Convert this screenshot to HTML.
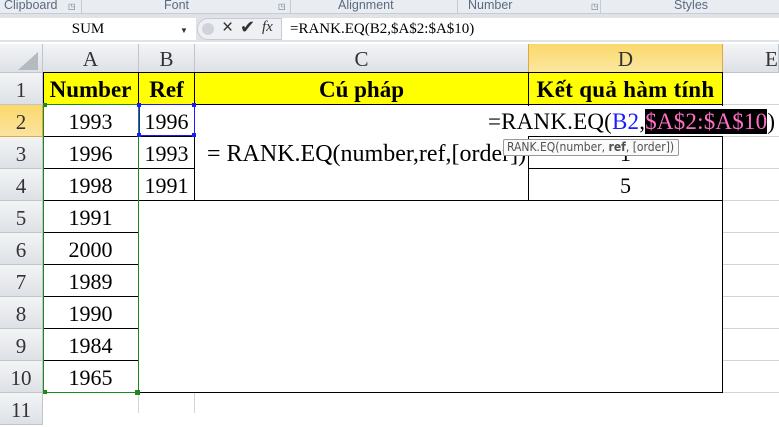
<!DOCTYPE html>
<html><head><meta charset="utf-8"><style>
*{margin:0;padding:0;box-sizing:border-box}
body{width:779px;height:412px;overflow:hidden;background:#fff;position:relative;font-family:"Liberation Serif",serif}
.a{position:absolute}
.rib{left:0;top:0;width:779px;height:14px;background:#e9edf2;border-bottom:1px solid #c5ccd6;font-family:"Liberation Sans",sans-serif;font-size:12.5px;color:#5a6a80}
.rib span{position:absolute;top:-2px}
.fb{left:0;top:14px;width:779px;height:28px;background:#dfe3e8}
.hdr{background:linear-gradient(#f3f4f6,#dde1e6);border-right:1px solid #c0c5cc;border-bottom:1px solid #c0c5cc;color:#333;font-size:21px;text-align:center}
.cell{font-size:22px;text-align:center;color:#000}
.h{position:absolute;background:#000;height:1px}
.v{position:absolute;background:#000;width:1px}
.g{position:absolute;background:#d4d4d4}
</style></head><body>
<div class="a rib">
<span style="left:4px">Clipboard</span><span style="left:68px;font-size:8px;top:2px">◳</span>
<span style="left:164px">Font</span><span style="left:278px;font-size:8px;top:2px">◳</span>
<span style="left:338px">Alignment</span>
<span style="left:468px">Number</span><span style="left:591px;font-size:8px;top:2px">◳</span>
<span style="left:674px">Styles</span>
<div class="a" style="left:81px;top:0;width:1px;height:14px;background:#c5ccd6"></div>
<div class="a" style="left:290px;top:0;width:1px;height:14px;background:#c5ccd6"></div>
<div class="a" style="left:457px;top:0;width:1px;height:14px;background:#c5ccd6"></div>
<div class="a" style="left:600px;top:0;width:1px;height:14px;background:#c5ccd6"></div>
</div>
<div class="a fb">
<div class="a" style="left:0;top:4px;width:196px;height:22px;background:#fff;font-size:15px;text-align:center;line-height:22px;padding-right:20px">SUM</div>
<div class="a" style="left:180px;top:12px;font-size:8px;color:#333">▼</div>
<div class="a" style="left:197px;top:4px;width:85px;height:22px;background:#eef0f3;border-radius:11px 0 0 11px;border:1px solid #c5ccd6"></div>
<div class="a" style="left:202px;top:9px;width:12px;height:12px;border-radius:6px;background:#d0d4da"></div>
<div class="a" style="left:222px;top:3px;font-family:'Liberation Sans',sans-serif;font-size:19px;color:#333">×</div>
<div class="a" style="left:240px;top:3px;font-size:18px;color:#333">✔</div>
<div class="a" style="left:262px;top:5px;font-size:15px;font-style:italic;color:#333">fx</div>
<div class="a" style="left:282px;top:4px;width:497px;height:22px;background:#fff;font-size:15px;line-height:22px;padding-left:8px">=RANK.EQ(B2,$A$2:$A$10)</div>
</div>
<div class="a" style="left:0;top:42px;width:779px;height:2px;background:#fff"></div>
<div class="a hdr" style="left:0;top:44px;width:43px;height:29px"></div>
<div class="a" style="left:18px;top:52px;width:0;height:0;border-left:20px solid transparent;border-bottom:18px solid #b5bac1"></div>
<div class="a hdr" style="left:43px;top:44px;width:96px;height:29px;line-height:30px">A</div>
<div class="a hdr" style="left:139px;top:44px;width:56px;height:29px;line-height:30px">B</div>
<div class="a hdr" style="left:195px;top:44px;width:334px;height:29px;line-height:30px">C</div>
<div class="a hdr" style="left:528px;top:44px;width:195px;height:29px;line-height:30px;background:linear-gradient(#fbd86a,#fbe7a2);border-color:#e0a840;border-left:1px solid #e0a840">D</div>
<div class="a hdr" style="left:723px;top:44px;width:56px;height:29px;line-height:30px;text-align:left;padding-left:42px">E</div>
<div class="a hdr" style="left:0;top:73px;width:43px;height:32px;line-height:34px">1</div>
<div class="a hdr" style="left:0;top:105px;width:43px;height:32px;line-height:34px;background:linear-gradient(#fbd86a,#fbe3a0);border-color:#e0a840">2</div>
<div class="a hdr" style="left:0;top:137px;width:43px;height:32px;line-height:34px">3</div>
<div class="a hdr" style="left:0;top:169px;width:43px;height:32px;line-height:34px">4</div>
<div class="a hdr" style="left:0;top:201px;width:43px;height:32px;line-height:34px">5</div>
<div class="a hdr" style="left:0;top:233px;width:43px;height:32px;line-height:34px">6</div>
<div class="a hdr" style="left:0;top:265px;width:43px;height:32px;line-height:34px">7</div>
<div class="a hdr" style="left:0;top:297px;width:43px;height:32px;line-height:34px">8</div>
<div class="a hdr" style="left:0;top:329px;width:43px;height:32px;line-height:34px">9</div>
<div class="a hdr" style="left:0;top:361px;width:43px;height:32px;line-height:34px">10</div>
<div class="a hdr" style="left:0;top:393px;width:43px;height:32px;line-height:34px">11</div>
<div class="g" style="left:723px;top:104px;width:56px;height:1px"></div>
<div class="g" style="left:723px;top:136px;width:56px;height:1px"></div>
<div class="g" style="left:723px;top:168px;width:56px;height:1px"></div>
<div class="g" style="left:723px;top:200px;width:56px;height:1px"></div>
<div class="g" style="left:723px;top:232px;width:56px;height:1px"></div>
<div class="g" style="left:723px;top:264px;width:56px;height:1px"></div>
<div class="g" style="left:723px;top:296px;width:56px;height:1px"></div>
<div class="g" style="left:723px;top:328px;width:56px;height:1px"></div>
<div class="g" style="left:723px;top:360px;width:56px;height:1px"></div>
<div class="g" style="left:723px;top:392px;width:56px;height:1px"></div>
<div class="g" style="left:138px;top:393px;width:1px;height:20px"></div>
<div class="g" style="left:194px;top:393px;width:1px;height:20px"></div>
<div class="a" style="left:43px;top:73px;width:680px;height:31px;background:#ffff00"></div>
<div class="a cell" style="left:43px;top:73px;width:95px;line-height:34px;font-weight:bold;font-size:23px">Number</div>
<div class="a cell" style="left:138px;top:73px;width:57px;line-height:34px;font-weight:bold;font-size:23px">Ref</div>
<div class="a cell" style="left:195px;top:73px;width:333px;line-height:34px;font-weight:bold;font-size:23px">Cú pháp</div>
<div class="a cell" style="left:528px;top:73px;width:195px;line-height:34px;font-weight:bold;font-size:23px;letter-spacing:0.3px">Kết quả hàm tính</div>
<div class="a cell" style="left:43px;top:105px;width:95px;line-height:34px">1993</div>
<div class="a cell" style="left:43px;top:137px;width:95px;line-height:34px">1996</div>
<div class="a cell" style="left:43px;top:169px;width:95px;line-height:34px">1998</div>
<div class="a cell" style="left:43px;top:201px;width:95px;line-height:34px">1991</div>
<div class="a cell" style="left:43px;top:233px;width:95px;line-height:34px">2000</div>
<div class="a cell" style="left:43px;top:265px;width:95px;line-height:34px">1989</div>
<div class="a cell" style="left:43px;top:297px;width:95px;line-height:34px">1990</div>
<div class="a cell" style="left:43px;top:329px;width:95px;line-height:34px">1984</div>
<div class="a cell" style="left:43px;top:361px;width:95px;line-height:34px">1965</div>
<div class="a cell" style="left:138px;top:105px;width:57px;line-height:34px">1996</div>
<div class="a cell" style="left:138px;top:137px;width:57px;line-height:34px">1993</div>
<div class="a cell" style="left:138px;top:169px;width:57px;line-height:34px">1991</div>
<div class="a cell" style="left:195px;top:137px;width:333px;line-height:34px;text-align:left;padding-left:12px;font-size:24px;white-space:nowrap">= RANK.EQ(number,ref,[order])</div>
<div class="a cell" style="left:528px;top:169px;width:195px;line-height:34px">5</div>
<div class="a cell" style="left:528px;top:137px;width:195px;line-height:34px">1</div>
<div class="h" style="left:43px;top:72px;width:680px"></div>
<div class="h" style="left:138px;top:104px;width:585px"></div>
<div class="h" style="left:43px;top:136px;width:152px"></div>
<div class="h" style="left:528px;top:136px;width:195px"></div>
<div class="h" style="left:43px;top:168px;width:152px"></div>
<div class="h" style="left:528px;top:168px;width:195px"></div>
<div class="h" style="left:43px;top:200px;width:680px"></div>
<div class="h" style="left:43px;top:232px;width:95px"></div>
<div class="h" style="left:43px;top:264px;width:95px"></div>
<div class="h" style="left:43px;top:296px;width:95px"></div>
<div class="h" style="left:43px;top:328px;width:95px"></div>
<div class="h" style="left:43px;top:360px;width:95px"></div>
<div class="h" style="left:138px;top:392px;width:585px"></div>
<div class="v" style="left:43px;top:72px;height:33px"></div>
<div class="v" style="left:138px;top:72px;height:320px"></div>
<div class="v" style="left:194px;top:72px;height:128px"></div>
<div class="v" style="left:528px;top:72px;height:128px"></div>
<div class="v" style="left:722px;top:72px;height:321px"></div>
<div class="a" style="left:43px;top:104px;width:96px;height:289px;border:1px solid #1a8a1a"></div>
<div class="a" style="left:43px;top:103px;width:4px;height:4px;background:#1a8a1a"></div>
<div class="a" style="left:135px;top:390px;width:5px;height:5px;background:#1a8a1a"></div>
<div class="a" style="left:43px;top:390px;width:4px;height:4px;background:#1a8a1a"></div>
<div class="a" style="left:139px;top:104px;width:56px;height:32px;border:1px solid #1a1aff"></div>
<div class="a" style="left:137px;top:103px;width:4px;height:4px;background:#1a1aff"></div>
<div class="a" style="left:192px;top:103px;width:4px;height:4px;background:#1a1aff"></div>
<div class="a" style="left:137px;top:133px;width:4px;height:4px;background:#1a1aff"></div>
<div class="a" style="left:192px;top:133px;width:4px;height:4px;background:#1a1aff"></div>
<div class="a" style="left:488px;top:106px;height:30px;font-size:23px;line-height:32px;white-space:nowrap;background:#fff;letter-spacing:0.2px">=RANK.EQ(<span style="color:#1a1aff">B2</span>,<span style="background:#000;color:#ff6ec7">$A$2:$A$10</span>)</div>
<div class="a" style="left:503px;top:139px;width:176px;height:17px;background:#fafafa;border:1px solid #9a9a9a;border-radius:2px;font-family:'DejaVu Sans Condensed','Liberation Sans',sans-serif;font-size:12px;line-height:15px;color:#505050;padding-left:3px;white-space:nowrap;overflow:hidden">RANK.EQ(number, <b>ref</b>, [order])</div>
</body></html>
